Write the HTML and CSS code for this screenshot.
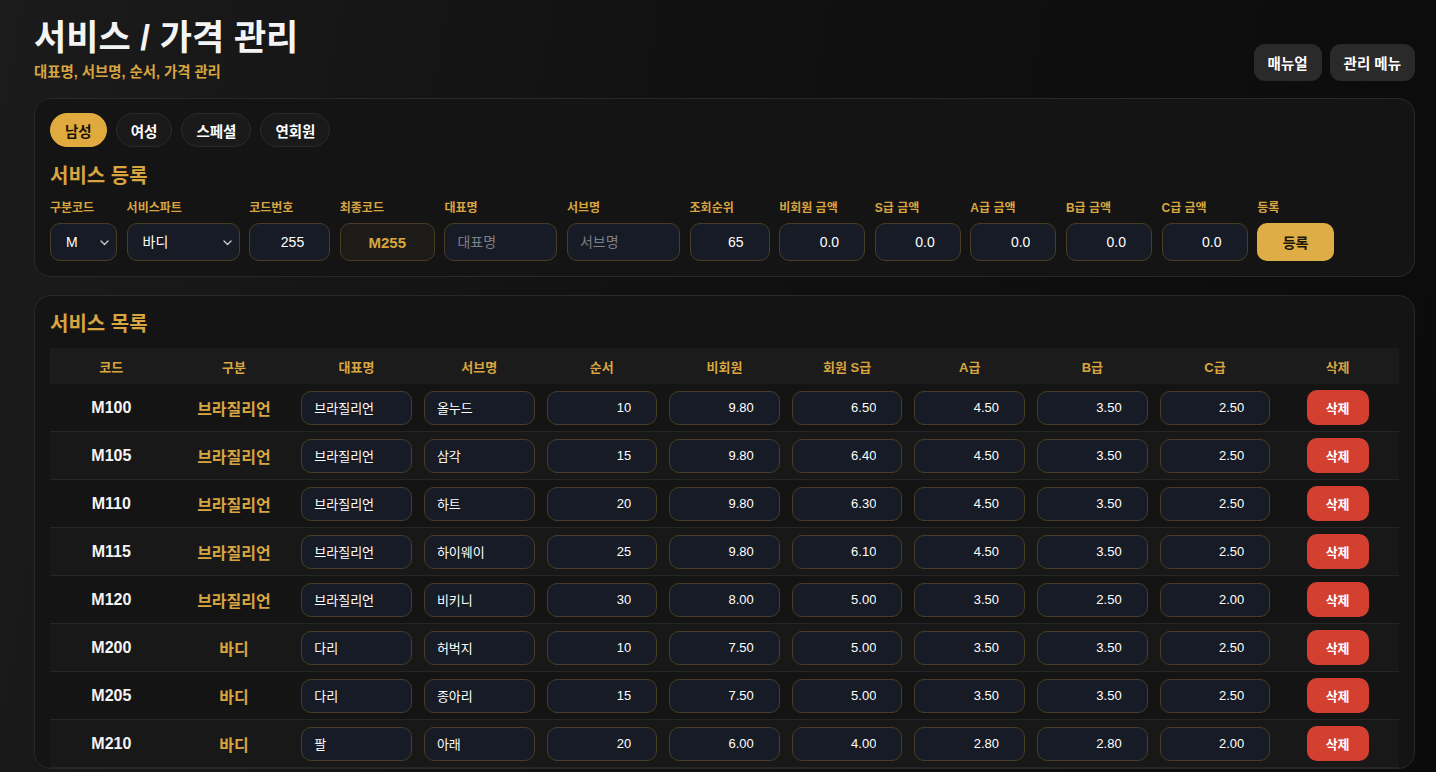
FILE: index.html
```html
<!DOCTYPE html>
<html lang="ko">
<head>
    <meta charset="UTF-8">
    <meta name="viewport" content="width=device-width, initial-scale=1.0">
    <title>서비스 / 가격 관리</title>
    <link rel="stylesheet" href="styles.css">
</head>
<body>
    <!-- 상단 헤더 -->
    <div class="page-header">
        <div>
            <h1 class="page-title">서비스 / 가격 관리</h1>
            <div class="page-sub">대표명, 서브명, 순서, 가격 관리</div>
        </div>
        <div class="header-actions">
            <button class="ghost-btn">매뉴얼</button>
            <button class="ghost-btn">관리 메뉴</button>
        </div>
    </div>

    <!-- 서비스 등록 -->
    <div class="card">
        <div class="tabs">
            <button class="tab active">남성</button>
            <button class="tab">여성</button>
            <button class="tab">스페셜</button>
            <button class="tab">연회원</button>
        </div>
        <div class="card-title">서비스 등록</div>
        <div class="form-grid">
            <div class="field">
                <label>구분코드</label>
                <div class="select-wrap">
                    <select class="input"><option>M</option></select>
                    <svg class="chevron" width="9" height="6" viewBox="0 0 9 6"><path d="M1 1l3.5 3.5L8 1" fill="none" stroke="#c9c9c9" stroke-width="1.4" stroke-linecap="round" stroke-linejoin="round"/></svg>
                </div>
            </div>
            <div class="field">
                <label>서비스파트</label>
                <div class="select-wrap">
                    <select class="input"><option>바디</option></select>
                    <svg class="chevron" width="9" height="6" viewBox="0 0 9 6"><path d="M1 1l3.5 3.5L8 1" fill="none" stroke="#c9c9c9" stroke-width="1.4" stroke-linecap="round" stroke-linejoin="round"/></svg>
                </div>
            </div>
            <div class="field">
                <label>코드번호</label>
                <input class="input num" type="text" value="255">
            </div>
            <div class="field">
                <label>최종코드</label>
                <div class="final-code">M255</div>
            </div>
            <div class="field">
                <label>대표명</label>
                <input class="input" type="text" placeholder="대표명">
            </div>
            <div class="field">
                <label>서브명</label>
                <input class="input" type="text" placeholder="서브명">
            </div>
            <div class="field">
                <label>조회순위</label>
                <input class="input num" type="text" value="65">
            </div>
            <div class="field">
                <label>비회원 금액</label>
                <input class="input num" type="text" value="0.0">
            </div>
            <div class="field">
                <label>S급 금액</label>
                <input class="input num" type="text" value="0.0">
            </div>
            <div class="field">
                <label>A급 금액</label>
                <input class="input num" type="text" value="0.0">
            </div>
            <div class="field">
                <label>B급 금액</label>
                <input class="input num" type="text" value="0.0">
            </div>
            <div class="field">
                <label>C급 금액</label>
                <input class="input num" type="text" value="0.0">
            </div>
            <div class="field">
                <label>등록</label>
                <button class="submit-btn">등록</button>
            </div>
        </div>
    </div>

    <!-- 서비스 목록 -->
    <div class="card list-card">
        <div class="card-title">서비스 목록</div>
        <table class="service-table">
            <thead>
                <tr>
                    <th>코드</th><th>구분</th><th>대표명</th><th>서브명</th><th>순서</th><th>비회원</th>
                    <th>회원 S급</th><th>A급</th><th>B급</th><th>C급</th><th>삭제</th>
                </tr>
            </thead>
            <tbody id="service-rows"></tbody>
        </table>
    </div>

    <script>
        const services = [
            ['M100', '브라질리언', '브라질리언', '올누드', 10, '9.80', '6.50', '4.50', '3.50', '2.50'],
            ['M105', '브라질리언', '브라질리언', '삼각', 15, '9.80', '6.40', '4.50', '3.50', '2.50'],
            ['M110', '브라질리언', '브라질리언', '하트', 20, '9.80', '6.30', '4.50', '3.50', '2.50'],
            ['M115', '브라질리언', '브라질리언', '하이웨이', 25, '9.80', '6.10', '4.50', '3.50', '2.50'],
            ['M120', '브라질리언', '브라질리언', '비키니', 30, '8.00', '5.00', '3.50', '2.50', '2.00'],
            ['M200', '바디', '다리', '허벅지', 10, '7.50', '5.00', '3.50', '3.50', '2.50'],
            ['M205', '바디', '다리', '종아리', 15, '7.50', '5.00', '3.50', '3.50', '2.50'],
            ['M210', '바디', '팔', '아래', 20, '6.00', '4.00', '2.80', '2.80', '2.00']
        ];

        const tbody = document.getElementById('service-rows');
        services.forEach(s => {
            const tr = document.createElement('tr');
            let html = `<td class="code">${s[0]}</td><td class="part">${s[1]}</td>`;
            html += `<td><input class="cell-input" type="text" value="${s[2]}"></td>`;
            html += `<td><input class="cell-input" type="text" value="${s[3]}"></td>`;
            for (let i = 4; i < 10; i++) {
                html += `<td><input class="cell-input num" type="text" value="${s[i]}"></td>`;
            }
            html += `<td><button class="delete-btn">삭제</button></td>`;
            tr.innerHTML = html;
            tbody.appendChild(tr);
        });
    </script>
</body>
</html>
```

FILE: styles.css
```css
body {
    font-family: "Liberation Sans", "Noto Sans CJK KR", sans-serif;
    margin: 0;
    padding: 18px 21px 0 34px;
    background: linear-gradient(100deg, #1b1b1b 0%, #111111 45%, #0b0b0b 100%);
    background-attachment: fixed;
    color: #fff;
    min-height: 100vh;
    box-sizing: border-box;
}

button, input, select {
    font-family: inherit;
}

.page-header {
    display: flex;
    justify-content: space-between;
    align-items: flex-end;
    margin-bottom: 16px;
}

.page-title {
    font-size: 35px;
    font-weight: bold;
    margin: 0;
    line-height: 40px;
    color: #f4f4f4;
}

.page-sub {
    font-size: 14.4px;
    font-weight: bold;
    color: #d9a541;
    margin-top: 4px;
    line-height: 20px;
}

.header-actions {
    display: flex;
    gap: 8px;
    margin-bottom: 1px;
}

.ghost-btn {
    background: #2a2a2a;
    border: none;
    border-radius: 11px;
    color: #fff;
    font-size: 14.5px;
    font-weight: bold;
    height: 37px;
    padding: 0 14px;
}

.card {
    background: #141414;
    border: 1px solid #2d2820;
    border-radius: 16px;
    padding: 14px 15px 15px 15px;
    margin-bottom: 18px;
}

.tabs {
    display: flex;
    gap: 9px;
}

.tab {
    height: 34px;
    padding: 0 14px;
    border-radius: 17px;
    border: 1px solid #2e2a22;
    background: #1a1a1a;
    color: #fff;
    font-size: 14.5px;
    font-weight: bold;
}

    .tab.active {
        background: #e0aa3e;
        border-color: #e0aa3e;
        color: #1a1406;
    }

.card-title {
    font-size: 20px;
    font-weight: bold;
    color: #d9a541;
    margin: 16px 0 11px;
    line-height: 26px;
}

.form-grid {
    display: grid;
    grid-template-columns: 67px 113px 81px 95px 113px 113px 80px 86px 86px 86px 86px 86px 77px;
    gap: 9.6px;
}

.field label {
    display: block;
    font-size: 12px;
    font-weight: bold;
    color: #d9a541;
    line-height: 16px;
    margin-bottom: 7px;
    white-space: nowrap;
}

.input {
    width: 100%;
    box-sizing: border-box;
    height: 38px;
    background: #171b25;
    border: 1px solid #4a3d25;
    border-radius: 10px;
    color: #fff;
    font-size: 14px;
    padding: 0 12px;
    outline: none;
}

    .input::placeholder {
        color: #7c7f86;
    }

    .input.num {
        text-align: right;
        padding-right: 25px;
    }

.select-wrap {
    position: relative;
}

select.input {
    appearance: none;
    -webkit-appearance: none;
    padding-left: 15px;
    display: block;
}

.chevron {
    position: absolute;
    right: 8px;
    top: 17px;
    pointer-events: none;
}

.final-code {
    height: 38px;
    box-sizing: border-box;
    border: 1px solid #4a3d25;
    border-radius: 10px;
    background: #1d1b17;
    color: #d9a541;
    font-size: 15px;
    font-weight: bold;
    display: flex;
    align-items: center;
    justify-content: center;
}

.submit-btn {
    width: 100%;
    height: 38px;
    border: none;
    border-radius: 10px;
    background: #dfad45;
    color: #1a1406;
    font-size: 14px;
    font-weight: bold;
}

.list-card {
    padding-top: 15px;
    padding-bottom: 0;
}

    .list-card .card-title {
        margin: 0 0 11px;
    }

.service-table {
    width: 100%;
    table-layout: fixed;
    border-collapse: collapse;
}

    .service-table th {
        background: #1b1b1b;
        color: #d9a541;
        font-size: 13px;
        font-weight: bold;
        height: 36px;
        padding: 0;
    }

    .service-table td {
        height: 47px;
        padding: 0 6px;
        text-align: center;
        border-bottom: 1px solid #262626;
    }

    .service-table tbody tr:nth-child(even) {
        background: #181818;
    }

    .service-table .code {
        font-size: 16px;
        font-weight: bold;
        color: #f4f4f4;
    }

    .service-table .part {
        font-size: 16px;
        font-weight: bold;
        color: #d9a541;
    }

.cell-input {
    width: 100%;
    box-sizing: border-box;
    height: 34px;
    background: #171b25;
    border: 1px solid #4a3d25;
    border-radius: 10px;
    color: #fff;
    font-size: 13px;
    padding: 0 12px;
    outline: none;
}

    .cell-input.num {
        text-align: right;
        padding-right: 25px;
    }

.delete-btn {
    width: 62px;
    height: 35px;
    border: none;
    border-radius: 10px;
    background: #d4402f;
    color: #fff;
    font-size: 13px;
    font-weight: bold;
}
```
